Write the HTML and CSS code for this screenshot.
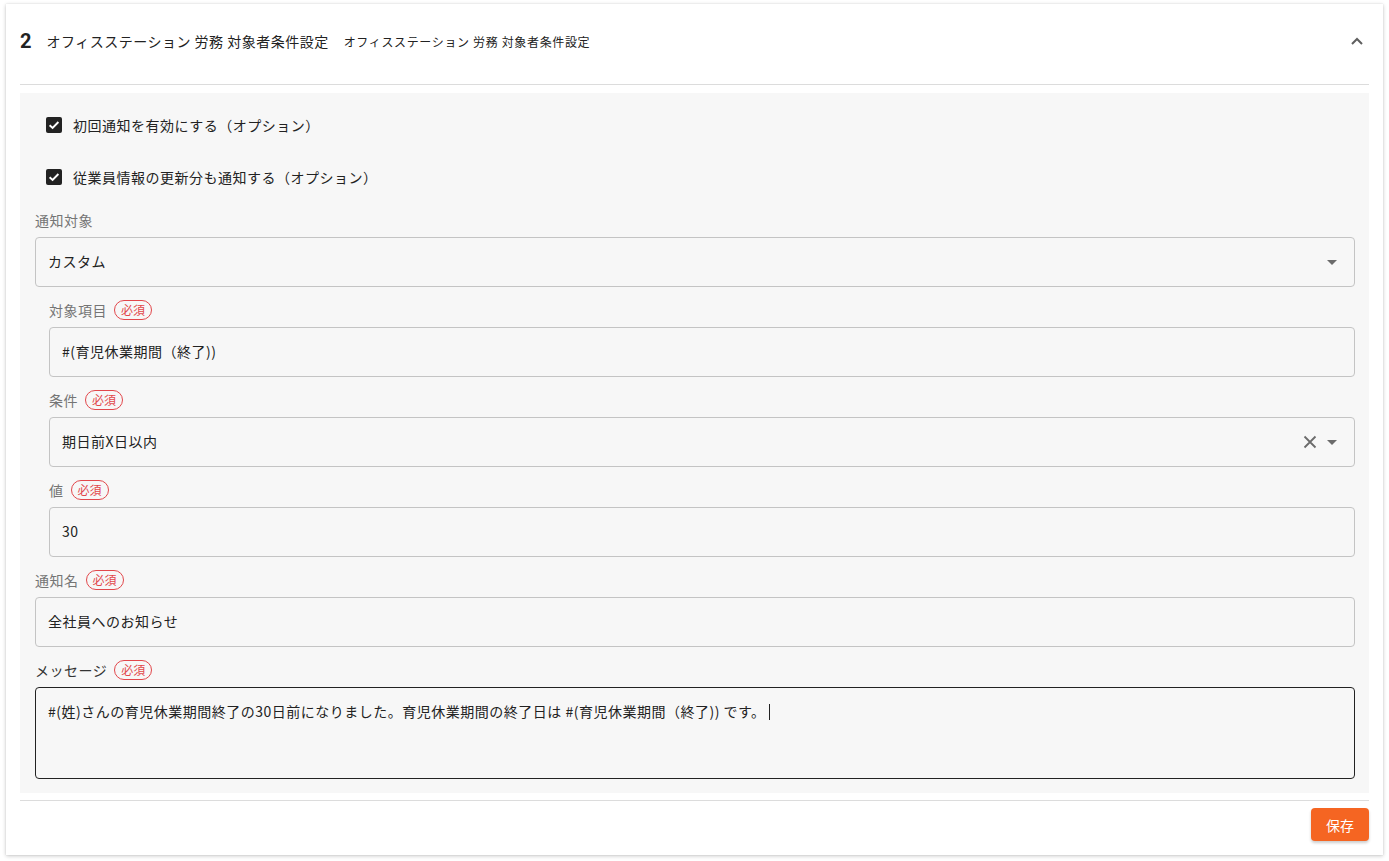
FILE: index.html
```html
<!DOCTYPE html>
<html lang="ja">
<head>
<meta charset="utf-8">
<title>オフィスステーション 労務 対象者条件設定</title>
<link rel="stylesheet" href="styles.css">
</head>
<body>
<section class="card">
  <header class="card-head">
    <span class="step">2</span>
    <span class="title">オフィスステーション 労務 対象者条件設定</span>
    <span class="subtitle">オフィスステーション 労務 対象者条件設定</span>
    <svg class="chevron" width="14" height="10" viewBox="0 0 14 10"><path d="M2 8 L7 3 L12 8" fill="none" stroke="#5f5f5f" stroke-width="2"/></svg>
  </header>

  <div class="panel">
    <label class="check-row">
      <span class="checkbox"><svg width="16" height="16" viewBox="0 0 16 16"><path d="M3.6 8.2 L6.6 11 L12.4 5" fill="none" stroke="#fff" stroke-width="1.9"/></svg></span>
      <span>初回通知を有効にする（オプション）</span>
    </label>
    <label class="check-row">
      <span class="checkbox"><svg width="16" height="16" viewBox="0 0 16 16"><path d="M3.6 8.2 L6.6 11 L12.4 5" fill="none" stroke="#fff" stroke-width="1.9"/></svg></span>
      <span>従業員情報の更新分も通知する（オプション）</span>
    </label>

    <div class="field first">
      <div class="label">通知対象</div>
      <div class="input">
        <span class="value">カスタム</span>
        <span class="arrow"></span>
      </div>
    </div>

    <div class="nested">
      <div class="field">
        <div class="label">対象項目<span class="badge">必須</span></div>
        <div class="input"><span class="value">#(育児休業期間（終了))</span></div>
      </div>
      <div class="field">
        <div class="label">条件<span class="badge">必須</span></div>
        <div class="input">
          <span class="value">期日前X日以内</span>
          <svg class="clear" width="14" height="14" viewBox="0 0 14 14"><path d="M1.5 1.5 L12.5 12.5 M12.5 1.5 L1.5 12.5" stroke="#6b6b6b" stroke-width="1.8"/></svg>
          <span class="arrow"></span>
        </div>
      </div>
      <div class="field">
        <div class="label">値<span class="badge">必須</span></div>
        <div class="input"><span class="value">30</span></div>
      </div>
    </div>

    <div class="field">
      <div class="label">通知名<span class="badge">必須</span></div>
      <div class="input"><span class="value">全社員へのお知らせ</span></div>
    </div>
    <div class="field">
      <div class="label dark">メッセージ<span class="badge">必須</span></div>
      <div class="textarea">#(姓)さんの育児休業期間終了の30日前になりました。育児休業期間の終了日は #(育児休業期間（終了)) です。<span class="caret"></span></div>
    </div>
  </div>

  <footer class="card-foot">
    <button class="save" type="button">保存</button>
  </footer>
</section>
</body>
</html>
```

FILE: styles.css
```css
* { box-sizing: border-box; }

body {
  margin: 0;
  background: #ffffff;
  font-family: "Noto Sans CJK JP", "Noto Sans", "Liberation Sans", sans-serif;
  letter-spacing: 0.5px;
  color: #222;
}

.card {
  margin: 4px 6px 6px 6px;
  width: 1377px;
  height: 851px;
  background: #fff;
  box-shadow: 0 1px 4px rgba(0, 0, 0, 0.22), 0 0 1px rgba(0, 0, 0, 0.12);
  display: flex;
  flex-direction: column;
}

.card-head {
  height: 81px;
  margin: 0 14px;
  border-bottom: 1px solid #dcdcdc;
  display: flex;
  align-items: center;
  padding-bottom: 6px;
}

.step {
  font-family: "Roboto", "Liberation Sans", sans-serif;
  font-weight: 700;
  font-size: 20px;
  letter-spacing: 0;
  margin-right: 15px;
  color: #222;
}

.title {
  font-size: 14px;
  color: #222;
  margin-right: 15px;
}

.subtitle {
  font-size: 12px;
  letter-spacing: 0.65px;
  color: #222;
}

.chevron {
  margin-left: auto;
  margin-right: 5px;
}

.panel {
  margin: 8px 14px 0 14px;
  background: #f7f7f7;
  padding: 14px 14px 14px 15px;
}

.check-row {
  display: flex;
  align-items: center;
  height: 36px;
  margin-bottom: 16px;
  padding-left: 11px;
  font-size: 14px;
  color: #222;
}

.check-row:nth-child(2) { margin-bottom: 0; }

.checkbox {
  width: 16px;
  height: 16px;
  border-radius: 2px;
  background: #222;
  margin-right: 11px;
  display: flex;
}

.field { margin-top: 13px; }
.field.first { margin-top: 15px; }

.label {
  height: 20px;
  display: flex;
  align-items: center;
  font-size: 14px;
  color: #757575;
  margin-bottom: 7px;
}

.label.dark { color: #333; }

.badge {
  margin-left: 7px;
  height: 20px;
  padding: 0 6px;
  border: 1px solid #e2474b;
  border-radius: 10px;
  color: #e2474b;
  font-size: 12px;
  letter-spacing: 0;
  display: inline-flex;
  align-items: center;
  line-height: 1;
}

.input {
  height: 50px;
  border: 1px solid #c4c4c4;
  border-radius: 4px;
  display: flex;
  align-items: center;
  padding: 0 12px;
  font-size: 14px;
  color: #222;
}

.value { flex: 1; margin-top: -2px; }

.arrow {
  width: 0;
  height: 0;
  border-left: 5px solid transparent;
  border-right: 5px solid transparent;
  border-top: 5px solid #6b6b6b;
  margin-right: 5px;
}

.clear { margin-right: 10px; }

.nested { padding-left: 14px; }

.textarea {
  height: 92px;
  border: 1px solid #222;
  border-radius: 4px;
  padding: 13px 12px;
  font-size: 14px;
  line-height: 20px;
  color: #222;
}

.caret {
  display: inline-block;
  width: 1px;
  height: 16px;
  background: #222;
  vertical-align: -3px;
  margin-left: 3px;
}

.card-foot {
  margin: 7px 14px 0 14px;
  border-top: 1px solid #dcdcdc;
  padding-top: 7px;
  display: flex;
  justify-content: flex-end;
}

.save {
  width: 58px;
  height: 33px;
  border: none;
  border-radius: 4px;
  background: #f56522;
  color: #fff;
  font-family: "Noto Sans CJK JP", sans-serif;
  font-size: 14px;
  box-shadow: 0 2px 3px rgba(0, 0, 0, 0.2);
}
```
